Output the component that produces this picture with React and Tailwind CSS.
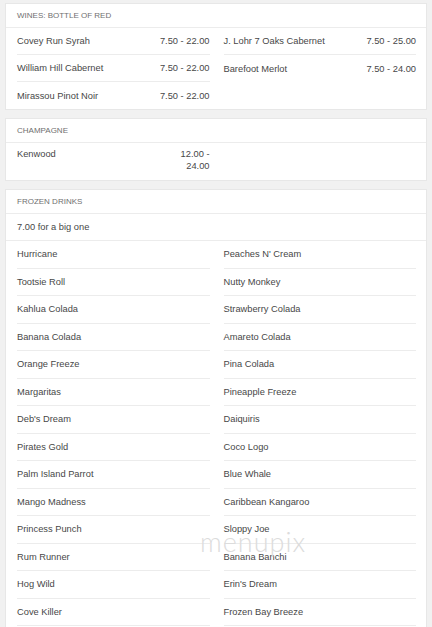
const wines = {
    left: [
        ["Covey Run Syrah", "7.50 - 22.00"],
        ["William Hill Cabernet", "7.50 - 22.00"],
        ["Mirassou Pinot Noir", "7.50 - 22.00"],
    ],
    right: [
        ["J. Lohr 7 Oaks Cabernet", "7.50 - 25.00"],
        ["Barefoot Merlot", "7.50 - 24.00"],
    ],
};

const frozenLeft = [
    "Hurricane", "Tootsie Roll", "Kahlua Colada", "Banana Colada", "Orange Freeze",
    "Margaritas", "Deb's Dream", "Pirates Gold", "Palm Island Parrot", "Mango Madness",
    "Princess Punch", "Rum Runner", "Hog Wild", "Cove Killer",
];

const frozenRight = [
    "Peaches N' Cream", "Nutty Monkey", "Strawberry Colada", "Amareto Colada", "Pina Colada",
    "Pineapple Freeze", "Daiquiris", "Coco Logo", "Blue Whale", "Caribbean Kangaroo",
    "Sloppy Joe", "Banana Banchi", "Erin's Dream", "Frozen Bay Breeze",
];

const Header = ({ children }) => (
    <div className="h-[24px] flex items-center border-b border-[#ececec] pl-[11px] text-[8px] leading-[10px] uppercase text-[#6f6f6f]">
        {children}
    </div>
);

const Item = ({ name, price, last, h }) => (
    <div className={h + " flex items-center justify-between leading-[12px] " + (last ? "" : "border-b border-[#ececec]")}>
        <span>{name}</span>
        {price && <span>{price}</span>}
    </div>
);

const Column = ({ items, noLastBorder, h = "h-[27.5px]" }) => (
    <div className="flex flex-col">
        {items.map((it, i) => (
            <Item key={i} h={h} name={it[0]} price={it[1]} last={noLastBorder && i === items.length - 1} />
        ))}
    </div>
);

export default function App() {
    return (
        <div
            className="relative min-h-[700px] bg-[#f1f1f1] pt-[3px] px-[5px] text-[9.3px] text-[#474747]"
            style={{ fontFamily: '"Liberation Sans", Arial, sans-serif' }}
        >
            {/* wines */}
            <div className="bg-white border border-[#e7e7e7]">
                <Header>Wines: Bottle of Red</Header>
                <div className="grid grid-cols-2 gap-x-[14px] pl-[11px] pr-[10px]">
                    <Column items={wines.left} noLastBorder h="h-[27px]" />
                    <Column items={wines.right} noLastBorder h="h-[27px]" />
                </div>
            </div>

            {/* champagne */}
            <div className="mt-[8px] bg-white border border-[#e7e7e7]">
                <Header>Champagne</Header>
                <div className="grid grid-cols-2 gap-x-[14px] pl-[11px] pr-[10px]">
                    <div className="h-[37px] flex justify-between pt-[5px] leading-[12px]">
                        <span>Kenwood</span>
                        <span className="text-right">12.00 -<br />24.00</span>
                    </div>
                    <div />
                </div>
            </div>

            {/* frozen drinks */}
            <div className="mt-[8px] bg-white border border-[#e7e7e7] pb-[40px]">
                <Header>Frozen Drinks</Header>
                <div className="h-[27px] flex items-center border-b border-[#ececec] pl-[11px] leading-[12px]">7.00 for a big one</div>
                <div className="grid grid-cols-2 gap-x-[14px] pl-[11px] pr-[10px]">
                    <Column items={frozenLeft.map((n) => [n])} />
                    <Column items={frozenRight.map((n) => [n])} />
                </div>
            </div>

            <div
                className="absolute left-[200px] top-[527px] text-[27px] leading-[30px] font-light tracking-[1px] text-[#dcdcdc] pointer-events-none"
                style={{ fontFamily: "Lato, sans-serif" }}
            >
                menupix
            </div>
        </div>
    );
}
